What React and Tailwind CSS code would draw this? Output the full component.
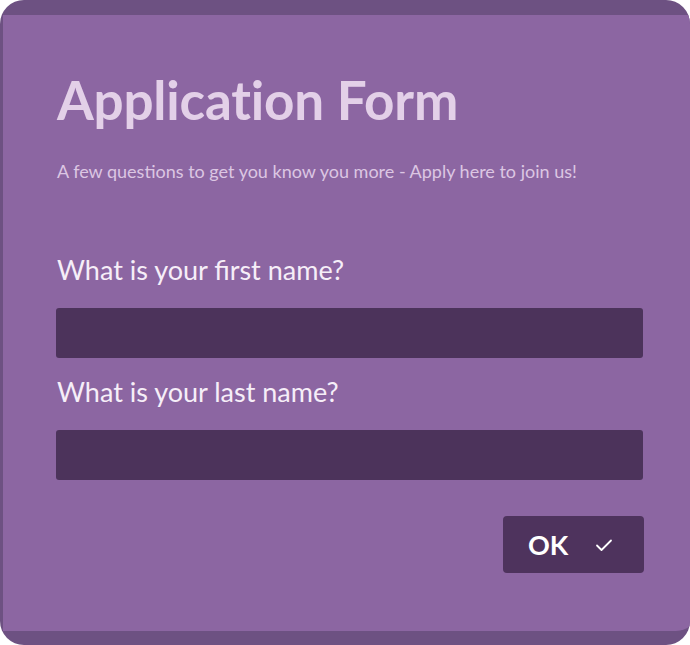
import React from "react";

export default function App() {
  return (
    <div className="w-[690px] h-[645px] bg-white" style={{ fontFamily: "Lato, 'Open Sans', sans-serif" }}>
      <div className="w-full h-full rounded-[24px] bg-[#6d5182] pt-[15px] pb-[14px] pl-[3px] overflow-hidden flex">
        <div className="flex-1 bg-[#8c66a2] rounded-br-[22px] rounded-tr-[2px] flex flex-col px-[54px]">
          {/* Header */}
          <h1 className="mt-[55px] text-[53px] leading-[60px] font-bold text-[#e3d0e8] tracking-[-0.2px]">
            Application Form
          </h1>
          <p className="mt-[30px] text-[18px] leading-[22px] text-[#dcc6e3]">
            A few questions to get you know you more - Apply here to join us!
          </p>

          {/* Fields */}
          <label className="mt-[72px] text-[27px] leading-[32px] text-[#f6eef8]">
            What is your first name?
          </label>
          <input
            type="text"
            className="mt-[22px] h-[50px] w-[587px] -ml-[1px] rounded-[3px] bg-[#4c335b] outline-none px-3 text-white"
          />
          <label className="mt-[18px] text-[27px] leading-[32px] text-[#f6eef8]">
            What is your last name?
          </label>
          <input
            type="text"
            className="mt-[22px] h-[50px] w-[587px] -ml-[1px] rounded-[3px] bg-[#4c335b] outline-none px-3 text-white"
          />

          {/* Submit */}
          <div className="flex justify-end w-[587px] mt-[36px]">
            <button className="w-[141px] h-[57px] rounded-[4px] bg-[#4e335d] flex items-center pl-[25px] gap-[26px] text-white">
              <span className="text-[27px] font-bold leading-none">OK</span>
              <svg width="20" height="16" viewBox="0 0 20 16" fill="none">
                <path d="M3 8.5 L7.5 13 L17 3.5" stroke="white" strokeWidth="1.8" strokeLinecap="round" strokeLinejoin="round" />
              </svg>
            </button>
          </div>
        </div>
      </div>
    </div>
  );
}
